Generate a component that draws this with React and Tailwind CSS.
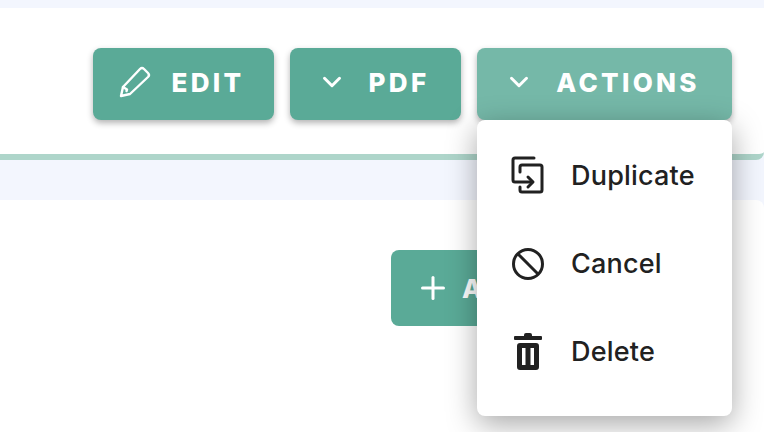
import React from 'react';
import { ChevronDown, Plus } from 'lucide-react';

const font = { fontFamily: 'Inter, sans-serif' };

const PencilIcon = () => (
  <svg width="34" height="34" viewBox="0 0 34 34" fill="none" stroke="white" strokeWidth="2.4" strokeLinejoin="round" strokeLinecap="round">
    <path d="M3 31 L5 22 L22 4 Q24 2 26 4 L30 8 Q32 10 30 12 L12 29 Z" />
    <path d="M5 22 L9 24.5 L8.5 26" />
  </svg>
);

const DuplicateIcon = () => (
  <svg width="34" height="38" viewBox="0 0 34 38" fill="none" stroke="#212121" strokeWidth="3" strokeLinecap="round" strokeLinejoin="round">
    <path d="M23 2 H4 Q2 2 2 4 V24 Q2 26 4 26 H20" />
    <path d="M9 16 V11 Q9 9 11 9 H29 Q31 9 31 11 V34 Q31 36 29 36 H11 Q9 36 9 34 V31" />
    <path d="M17 21 L22 26 L17 31" />
  </svg>
);

const CancelIcon = () => (
  <svg width="34" height="34" viewBox="0 0 34 34" fill="none" stroke="#212121" strokeWidth="3">
    <circle cx="17" cy="18" r="14.5" />
    <path d="M7 8 L27 28" />
  </svg>
);

const TrashIcon = () => (
  <svg width="28" height="38" viewBox="0 -1 28 38" fill="#212121">
    <path d="M10 2 Q10 0 12 0 H16 Q18 0 18 2 V3 H27 Q28 3 28 4 V6 Q28 7 27 7 H1 Q0 7 0 6 V4 Q0 3 1 3 H10 Z" />
    <path fillRule="evenodd" d="M6 10 H22 Q25 10 25 13 V34 Q25 37 22 37 H6 Q3 37 3 34 V13 Q3 10 6 10 Z M8 15 V32 H11.5 V15 Z M16.5 15 V32 H20 V15 Z" />
  </svg>
);

const Btn = ({ className, icon, label, gap = 'gap-5' }) => (
  <button className={`h-[72px] rounded-lg flex items-center justify-center ${gap} pr-[5px] pb-1 text-white font-extrabold text-[26px] tracking-[3.3px] shadow-[0_3px_6px_rgba(0,0,0,0.3)] ${className}`}>
    {icon}
    <span>{label}</span>
  </button>
);

const items = [
  { label: 'Duplicate', icon: <DuplicateIcon /> },
  { label: 'Cancel', icon: <CancelIcon /> },
  { label: 'Delete', icon: <TrashIcon /> },
];

export default function App() {
  return (
    <div className="w-[764px] h-[432px] overflow-hidden bg-[#f3f6fe]" style={font}>
      <div className="pt-2">
        <div className="h-[152px] bg-white border-b-[6px] border-[#aed5ca] rounded-br-lg flex justify-end gap-4 pt-10 pr-8">
          <Btn className="w-[181px] bg-[#5aaa97]" icon={<PencilIcon />} label="EDIT" />
          <Btn className="w-[171px] bg-[#5aaa97]" gap="gap-[22px]" icon={<ChevronDown size={30} strokeWidth={2.4} />} label="PDF" />
          <div className="relative w-[255px]">
            <Btn className="w-full bg-[#75b8a8]" gap="gap-[22px]" icon={<ChevronDown size={30} strokeWidth={2.4} />} label="ACTIONS" />
            <div className="absolute z-10 top-[72px] left-0 w-full h-[296px] bg-white rounded-lg pt-[11px] shadow-[0_8px_30px_rgba(0,0,0,0.35)]">
              {items.map((item) => (
                <div key={item.label} className="h-[88px] flex items-center">
                  <div className="ml-[34px] w-[34px] mr-[26px] flex-none flex justify-center">{item.icon}</div>
                  <span className="pt-0.5 text-[27px] font-medium tracking-[0.2px] text-[#212121]">{item.label}</span>
                </div>
              ))}
            </div>
          </div>
        </div>
      </div>
      <div className="mt-10 h-[232px] bg-white rounded-tr-lg pt-[50px] pl-[391px]">
        <button className="w-[250px] h-[76px] rounded-lg bg-[#5aaa97] flex items-center gap-[11px] pl-6 text-white font-extrabold text-[26px] tracking-[3.3px]">
          <Plus size={36} strokeWidth={2} />
          <span>ADD</span>
        </button>
      </div>
    </div>
  );
}
